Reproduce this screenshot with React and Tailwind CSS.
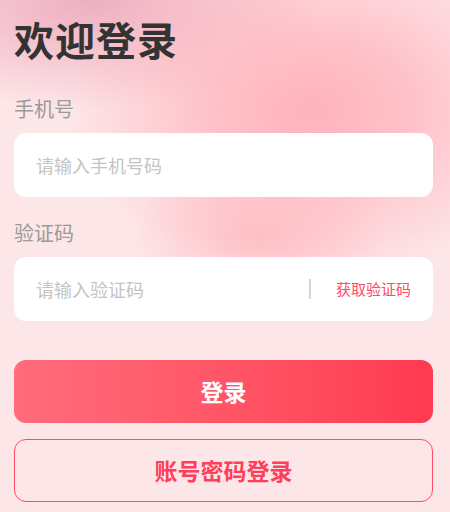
export default function App() {
  return (
    <div
      className="w-[450px] h-[512px] overflow-hidden bg-[#fde6e8] bg-[image:radial-gradient(ellipse_130px_70px_at_260px_235px,rgba(255,188,194,0.9)_0%,rgba(255,188,194,0)_100%),radial-gradient(ellipse_240px_170px_at_310px_110px,#ffb2bc_0%,rgba(255,180,189,0.75)_40%,rgba(255,180,189,0)_100%),radial-gradient(ellipse_230px_110px_at_90px_0px,#eeafc0_0%,rgba(240,178,194,0.6)_50%,rgba(240,178,194,0)_100%),radial-gradient(ellipse_160px_60px_at_450px_0px,#fde3e7_0%,rgba(253,227,231,0)_100%)] pl-[14px] pr-[17px] pt-[15px] flex flex-col"
      style={{ fontFamily: '"Noto Sans CJK SC", "Noto Sans", sans-serif' }}
    >
      <h1 className="text-[40px] leading-[48px] font-bold text-[#333333] tracking-[1px]">欢迎登录</h1>

      <div className="mt-[32px] text-[20px] leading-[28px] text-[#9a9a9a]">手机号</div>
      <div className="mt-[10px] h-[64px] rounded-[12px] bg-white flex items-center pl-[22px]">
        <span className="text-[18px] text-[#c4c4c4]">请输入手机号码</span>
      </div>

      <div className="mt-[22px] text-[20px] leading-[28px] text-[#9a9a9a]">验证码</div>
      <div className="mt-[10px] h-[64px] rounded-[12px] bg-white flex items-center pl-[22px] pr-[22px]">
        <span className="text-[18px] text-[#c4c4c4] flex-1">请输入验证码</span>
        <div className="w-[2px] h-[20px] bg-[#d3d6da]"></div>
        <span className="ml-[25px] text-[15px] text-[#ff4a65]">获取验证码</span>
      </div>

      <button className="mt-[39px] h-[63px] rounded-[12px] bg-gradient-to-r from-[#ff6c7b] to-[#ff3951] text-white text-[23px] font-bold flex items-center justify-center">
        登录
      </button>

      <button className="mt-[16px] h-[63px] rounded-[12px] border-[1.5px] border-[#ff4d64] text-[#ff3f5a] text-[23px] font-bold flex items-center justify-center">
        账号密码登录
      </button>
    </div>
  );
}
